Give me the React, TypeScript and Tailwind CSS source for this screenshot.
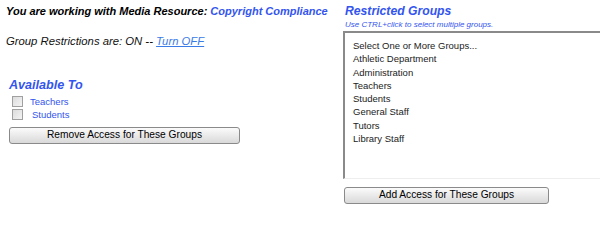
const groups = [
  'Select One or More Groups...',
  'Athletic Department',
  'Administration',
  'Teachers',
  'Students',
  'General Staff',
  'Tutors',
  'Library Staff',
];

const btn =
  'h-[17px] rounded-[3px] border border-[#8a8a8a] bg-gradient-to-b from-[#fbfbfb] to-[#d9d9d9] text-[10.2px] leading-none text-black';

export default function App() {
  return (
    <div className="flex h-[250px] w-[600px] bg-white font-['Liberation_Sans',Arial,sans-serif]">
      <div className="w-[343px] pl-[6px] pt-[4px]">
        <p className="whitespace-nowrap text-[11px] font-bold italic leading-[15px] text-black">
          You are working with Media Resource: <span className="text-[#3355ee]">Copyright Compliance</span>
        </p>
        <p className="mt-[15px] whitespace-nowrap text-[11.3px] italic leading-[15px] text-[#111]">
          Group Restrictions are: ON -- <a href="#" className="text-[#3a7be6] underline">Turn OFF</a>
        </p>

        <h2 className="mt-[28px] pl-[3px] text-[12.6px] font-bold italic leading-[17px] text-[#3355ee]">Available To</h2>
        <div className="mt-[1px] flex flex-col pl-[6px] text-[9.5px] leading-[13px] text-[#3355ee]">
          <label className="flex items-center">
            <span className="inline-block h-[11px] w-[11px] border border-[#a0a0a0] bg-gradient-to-br from-[#dcdcdc] to-[#f4f4f4]" />
            <span className="ml-[7px]">Teachers</span>
          </label>
          <label className="flex items-center">
            <span className="inline-block h-[11px] w-[11px] border border-[#a0a0a0] bg-gradient-to-br from-[#dcdcdc] to-[#f4f4f4]" />
            <span className="ml-[9px]">Students</span>
          </label>
        </div>
        <button type="button" className={`-mt-[2px] ml-[3px] w-[231px] ${btn}`}>
          Remove Access for These Groups
        </button>
      </div>

      <div className="flex-1 pt-[3px]">
        <h2 className="pl-[2px] text-[12.2px] font-bold italic leading-[17px] text-[#3355ee]">Restricted Groups</h2>
        <p className="pl-[2px] text-[8px] italic leading-[10px] text-[#3355ee]">Use CTRL+click to select multiple groups.</p>
        <div className="mt-[1px] h-[148px] border-l-2 border-t-2 border-l-[#8a8a8a] border-t-[#8a8a8a] border-b border-b-[#eeeeee] pl-[8px] pt-[6px]">
          {groups.map((g) => (
            <div key={g} className="text-[9.5px] leading-[13.3px] text-[#222]">
              {g}
            </div>
          ))}
        </div>
        <button type="button" className={`ml-[1px] mt-[8px] w-[205px] ${btn}`}>
          Add Access for These Groups
        </button>
      </div>
    </div>
  );
}
